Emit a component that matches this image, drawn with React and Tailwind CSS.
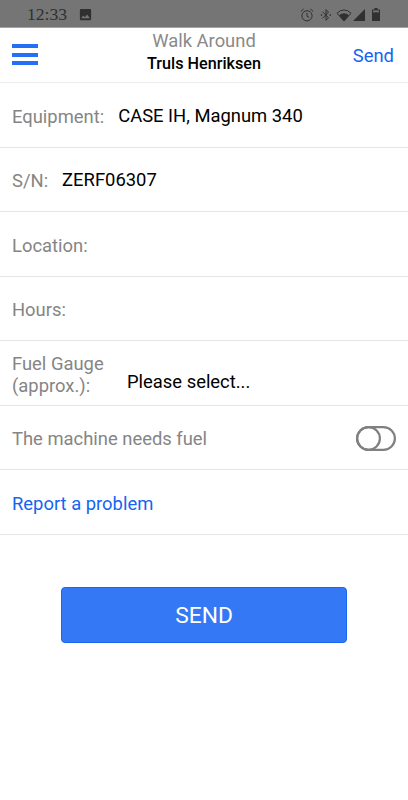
import React from "react";
import { MdImage } from "react-icons/md";

const StatusBar = () => (
  <div className="flex h-7 items-center justify-between border-b border-[#a4a4a4] bg-[#757575] pl-[27px] pr-[28px] text-[#303030]">
    <div className="flex items-center">
      <span className="w-[51px] pt-px font-['Liberation_Serif',serif] text-[17.6px] leading-7">
        12:33
      </span>
      <MdImage size={15} className="mt-px" />
    </div>
    <div className="flex items-center pt-[2px]">
      <svg width="14" height="14" viewBox="0 0 14 14" className="mr-[6px]" fill="none" stroke="currentColor">
        <circle cx="7" cy="7.8" r="5.1" strokeWidth="1" />
        <path d="M7 4.8v3.4l2.2 1.3M.8 3.4 3.6 1M13.2 3.4 10.4 1" strokeWidth="1" />
      </svg>
      {/* bluetooth with the two "connected" dots */}
      <svg width="12" height="14" viewBox="0 0 12 14" className="mr-[4px]">
        <path
          d="M2.5 3.7 8.5 9.8 6 12.3V1.7l2.5 2.5-6 6.1"
          fill="none"
          stroke="currentColor"
          strokeWidth="1"
        />
        <path d="M.8 6.3h1.4v1.4H.8zM9.6 6.3H11v1.4H9.6z" fill="currentColor" />
      </svg>
      <svg width="16" height="14" viewBox="0 0 16 14" className="mr-px">
        <path d="M1 5.2Q8-1.4 15 5.2L8 13Z" fill="none" stroke="currentColor" strokeWidth="1" />
        <path d="M3 7.2Q8 3.2 13 7.2L8 13Z" fill="currentColor" />
      </svg>
      <svg width="12" height="12" viewBox="0 0 12 12" className="mr-[7px]">
        <path d="M0 12 12 0v12z" fill="currentColor" />
      </svg>
      <svg width="8" height="13" viewBox="0 0 8 13">
        <path d="M2.5 0h3v1.5H8V13H0V1.5h2.5z" fill="currentColor" />
        <path d="M1 2.5h6v1.8H1z" fill="#757575" />
      </svg>
    </div>
  </div>
);

const Header = () => (
  <header className="grid h-[55px] grid-cols-[100px_1fr_100px] border-b border-[#ececec]">
    <button aria-label="Menu" className="flex flex-col gap-[4.5px] pl-3 pt-4">
      <span className="h-1 w-[25.5px] bg-[#2470f5]" />
      <span className="h-1 w-[25.5px] bg-[#2470f5]" />
      <span className="h-1 w-[25.5px] bg-[#2470f5]" />
    </button>
    <div className="text-center">
      <h1 className="text-[18.4px] leading-[25px] text-[#8a8a8a]">
        Walk Around
      </h1>
      <p className="text-[16.2px] font-medium leading-[22px] text-black">
        Truls Henriksen
      </p>
    </div>
    <button className="pr-[14px] pt-[2px] text-right text-[18.4px] text-[#1465f2]">
      Send
    </button>
  </header>
);

const Row = ({ children }) => (
  <div className="flex h-[64.5px] items-center border-b border-[#e6e6e6] px-3 pt-1 text-[18.4px] leading-[22px] text-[#858585]">
    {children}
  </div>
);

const Field = ({ label, value }) => (
  <Row>
    <span>{label}</span>
    {value && <span className="-mt-[2px] ml-[14px] text-black">{value}</span>}
  </Row>
);

const Toggle = () => (
  <svg width="40" height="25" viewBox="0 0 40 25" className="-mt-[2px] ml-auto" role="switch" aria-checked="false">
    <g fill="none" stroke="#808080" strokeWidth="2.2">
      <rect x="1.1" y="1.1" width="37.8" height="22.8" rx="11.4" />
      <circle cx="12.5" cy="12.5" r="11.4" />
    </g>
  </svg>
);

export default function App() {
  return (
    <div className="h-[800px] w-[408px] overflow-hidden bg-white font-['Roboto',sans-serif]">
      <StatusBar />
      <Header />
      <main>
        <Field label="Equipment:" value="CASE IH, Magnum 340" />
        <Field label="S/N:" value="ZERF06307" />
        <Field label="Location:" />
        <Field label="Hours:" />
        <Row>
          <span className="w-[115px]">
            Fuel Gauge
            <br />
            (approx.):
          </span>
          <span className="mt-[14px] text-black">Please select...</span>
        </Row>
        <Row>
          <span>The machine needs fuel</span>
          <Toggle />
        </Row>
        <Row>
          <button className="text-[#1465f2]">Report a problem</button>
        </Row>
        <button className="ml-[61px] mt-[52px] block h-14 w-[286px] rounded border border-[#1668f2] bg-[#3478f6] pt-[3px] text-[22.8px] text-white">
          SEND
        </button>
      </main>
    </div>
  );
}
